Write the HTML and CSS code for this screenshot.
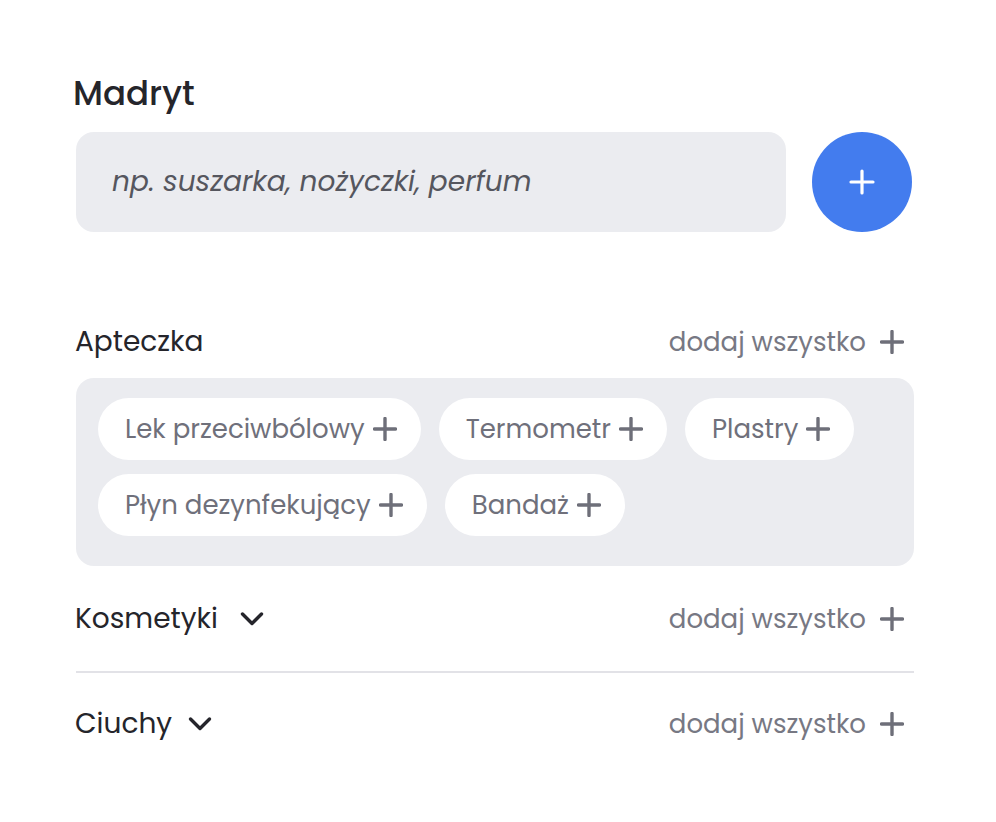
FILE: index.html
```html
<!DOCTYPE html>
<html lang="pl">
<head>
<meta charset="utf-8">
<title>Madryt</title>
<link rel="stylesheet" href="styles.css">
</head>
<body>
<main class="page">
  <h1 class="title">Madryt</h1>
  <div class="add-row">
    <div class="input"><span class="placeholder">np. suszarka, nożyczki, perfum</span></div>
    <button class="add-btn" aria-label="Dodaj">
      <svg width="28" height="28" viewBox="0 0 28 28"><path d="M14 3v22M3 14h22" stroke="#fff" stroke-width="3.2" stroke-linecap="round"/></svg>
    </button>
  </div>

  <section class="group open">
    <div class="group-head">
      <span class="group-name">Apteczka</span>
      <span class="add-all">dodaj wszystko <svg class="plus" width="24" height="24" viewBox="0 0 24 24"><path d="M12 1.5v21M1.5 12h21" stroke="currentColor" stroke-width="3.4" stroke-linecap="round"/></svg></span>
    </div>
    <div class="chips">
      <span class="chip">Lek przeciwbólowy <svg class="plus" width="24" height="24" viewBox="0 0 24 24"><path d="M12 1.5v21M1.5 12h21" stroke="currentColor" stroke-width="3.4" stroke-linecap="round"/></svg></span>
      <span class="chip">Termometr <svg class="plus" width="24" height="24" viewBox="0 0 24 24"><path d="M12 1.5v21M1.5 12h21" stroke="currentColor" stroke-width="3.4" stroke-linecap="round"/></svg></span>
      <span class="chip">Plastry <svg class="plus" width="24" height="24" viewBox="0 0 24 24"><path d="M12 1.5v21M1.5 12h21" stroke="currentColor" stroke-width="3.4" stroke-linecap="round"/></svg></span>
      <span class="chip">Płyn dezynfekujący <svg class="plus" width="24" height="24" viewBox="0 0 24 24"><path d="M12 1.5v21M1.5 12h21" stroke="currentColor" stroke-width="3.4" stroke-linecap="round"/></svg></span>
      <span class="chip">Bandaż <svg class="plus" width="24" height="24" viewBox="0 0 24 24"><path d="M12 1.5v21M1.5 12h21" stroke="currentColor" stroke-width="3.4" stroke-linecap="round"/></svg></span>
    </div>
  </section>

  <section class="group row first">
    <div class="group-head">
      <span class="group-name">Kosmetyki <svg class="chev wide" width="24" height="16" viewBox="0 0 24 16"><path d="M2.5 3l9.5 9.5L21.5 3" fill="none" stroke="currentColor" stroke-width="3.4" stroke-linecap="round" stroke-linejoin="round"/></svg></span>
      <span class="add-all">dodaj wszystko <svg class="plus" width="24" height="24" viewBox="0 0 24 24"><path d="M12 1.5v21M1.5 12h21" stroke="currentColor" stroke-width="3.4" stroke-linecap="round"/></svg></span>
    </div>
  </section>

  <section class="group row">
    <div class="group-head">
      <span class="group-name">Ciuchy <svg class="chev" width="24" height="16" viewBox="0 0 24 16"><path d="M2.5 3l9.5 9.5L21.5 3" fill="none" stroke="currentColor" stroke-width="3.4" stroke-linecap="round" stroke-linejoin="round"/></svg></span>
      <span class="add-all">dodaj wszystko <svg class="plus" width="24" height="24" viewBox="0 0 24 24"><path d="M12 1.5v21M1.5 12h21" stroke="currentColor" stroke-width="3.4" stroke-linecap="round"/></svg></span>
    </div>
  </section>
</main>
</body>
</html>
```

FILE: styles.css
```css
* { box-sizing: border-box; }

html, body {
  margin: 0;
  padding: 0;
  background: #ffffff;
}

body {
  font-family: "Poppins", "Inter", "Noto Sans", sans-serif;
  color: #25252b;
}

.page {
  width: 838px;
  margin-left: 76px;
  padding-top: 72px;
}

.title {
  margin: 0 0 0 -3px;
  font-size: 34px;
  font-weight: 500;
  line-height: 42px;
  color: #25252b;
  height: 60px;
}

.add-row {
  display: flex;
  align-items: center;
  gap: 26px;
}

.input {
  width: 710px;
  height: 100px;
  background: #ebecf0;
  border-radius: 18px;
  display: flex;
  align-items: center;
  padding-left: 36px;
}

.placeholder {
  font-size: 28px;
  font-style: italic;
  color: #55565e;
}

.add-btn {
  width: 100px;
  height: 100px;
  border-radius: 50%;
  border: 0;
  background: #437cee;
  display: flex;
  align-items: center;
  justify-content: center;
  padding: 0;
}

.group-head {
  display: flex;
  align-items: center;
  justify-content: space-between;
  padding-right: 10px;
}

.group-name {
  display: flex;
  align-items: center;
  gap: 16px;
  font-size: 28px;
  font-weight: 400;
  color: #25252b;
  margin-left: -1px;
}

.add-all {
  display: flex;
  align-items: center;
  gap: 14px;
  font-size: 26px;
  color: #777883;
}

.plus { color: #6e6f79; flex: none; }
.chev { color: #25252b; flex: none; }
.chev.wide { margin-left: 6px; }

.group.open { margin-top: 86px; }
.group.open .group-head { height: 48px; margin-bottom: 12px; }

.chips {
  background: #ebecf0;
  border-radius: 18px;
  padding: 20px 22px 30px;
  display: flex;
  flex-wrap: wrap;
  gap: 14px 18px;
}

.chip {
  display: flex;
  align-items: center;
  gap: 8px;
  height: 62px;
  padding: 0 24px 0 27px;
  background: #ffffff;
  border-radius: 31px;
  font-size: 26px;
  color: #6f707b;
}

.group.row .group-head { height: 102px; }
.group.row.first .group-head {
  height: 107px;
  border-bottom: 2px solid #e2e2e7;
  padding-top: 1px;
}
```
